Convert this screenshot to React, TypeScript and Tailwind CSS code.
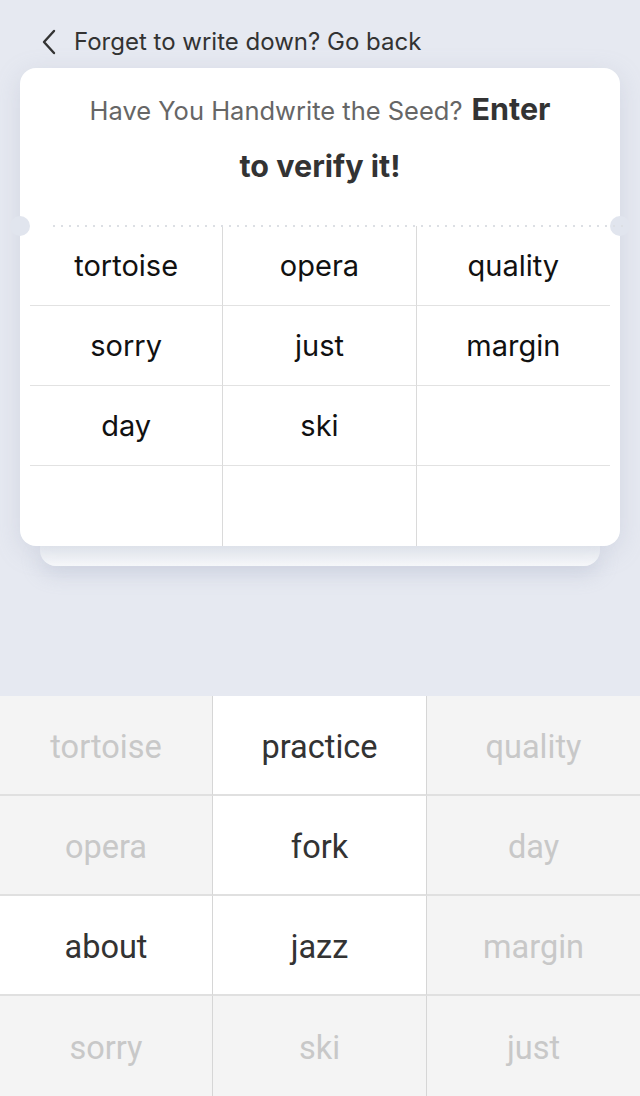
const seedGrid = ["tortoise", "opera", "quality", "sorry", "just", "margin", "day", "ski", "", "", "", ""];

const keys = [
  { word: "tortoise", on: false },
  { word: "practice", on: true },
  { word: "quality", on: false },
  { word: "opera", on: false },
  { word: "fork", on: true },
  { word: "day", on: false },
  { word: "about", on: true },
  { word: "jazz", on: true },
  { word: "margin", on: false },
  { word: "sorry", on: false },
  { word: "ski", on: false },
  { word: "just", on: false },
];

export default function App() {
  return (
    <div
      className="h-[1096px] w-[640px] bg-[#e6e9f1] flex flex-col overflow-hidden"
      style={{ fontFamily: "Inter, Roboto, 'Liberation Sans', sans-serif" }}
    >
      {/* Header */}
      <div className="h-[68px] flex items-center pl-[41px] pt-[16px]">
        <svg width="16" height="26" viewBox="0 0 16 26" className="text-[#333]">
          <polyline
            points="13,2 3,13 13,24"
            fill="none"
            stroke="currentColor"
            strokeWidth="2.4"
            strokeLinecap="round"
            strokeLinejoin="round"
          />
        </svg>
        <span className="ml-[17px] text-[24px] text-[#333]">Forget to write down? Go back</span>
      </div>

      {/* Card */}
      <div className="relative z-10 mx-[20px] bg-white rounded-2xl shadow-[0_6px_24px_rgba(150,160,185,0.25)]">
        <div className="pt-[12px] pb-[32px] text-center">
          <div className="h-[57px] flex items-center justify-center">
            <div className="flex items-baseline gap-[9px]">
              <span className="text-[25.5px] text-[#666]">Have You Handwrite the Seed?</span>
              <span className="text-[30.5px] font-bold text-[#333]">Enter</span>
            </div>
          </div>
          <div className="h-[57px] flex items-center justify-center text-[30.5px] font-bold text-[#333]">
            to verify it!
          </div>
        </div>

        {/* Divider with notches */}
        <div className="relative h-0">
          <div className="absolute -left-[10px] -top-[10px] w-[20px] h-[20px] rounded-full bg-[#e1e5ee]" />
          <div className="absolute -right-[10px] -top-[10px] w-[20px] h-[20px] rounded-full bg-[#e1e5ee]" />
          <svg className="absolute left-[32px] -top-[1px]" width="576" height="2">
            <line x1="1" y1="1" x2="576" y2="1" stroke="#dcdfe4" strokeWidth="2" strokeDasharray="2 6" />
          </svg>
        </div>

        <div className="mx-[10px] grid grid-cols-3">
          {seedGrid.map((w, i) => (
            <div
              key={i}
              className={`h-[80px] flex items-center justify-center text-[29px] text-[#111] ${
                i % 3 !== 2 ? "border-r border-[#dadada]" : ""
              } ${i < 9 ? "border-b border-b-[#e2e2e2]" : ""}`}
            >
              {w}
            </div>
          ))}
        </div>
      </div>
      <div className="mx-[40px] h-[20px] rounded-b-2xl bg-gradient-to-b from-[#edf0f5] to-[#f9fafc] shadow-[0_8px_20px_rgba(150,160,185,0.3)]" />

      <div className="flex-1" />

      {/* Word keyboard */}
      <div
        className="grid grid-cols-[213px_214px_213px]"
        style={{ fontFamily: "Roboto, 'Liberation Sans', sans-serif" }}
      >
        {keys.map((k, i) => (
          <div
            key={i}
            className={`h-[100px] flex items-center justify-center pt-[4px] text-[32.5px] ${
              k.on ? "bg-white text-[#333]" : "bg-[#f4f4f4] text-[#c8c8c8]"
            } ${i % 3 !== 2 ? "border-r border-[#d6d6d6]" : ""} ${i < 9 ? "border-b-2 border-b-[#e0e0e0]" : ""}`}
          >
            {k.word}
          </div>
        ))}
      </div>
    </div>
  );
}
